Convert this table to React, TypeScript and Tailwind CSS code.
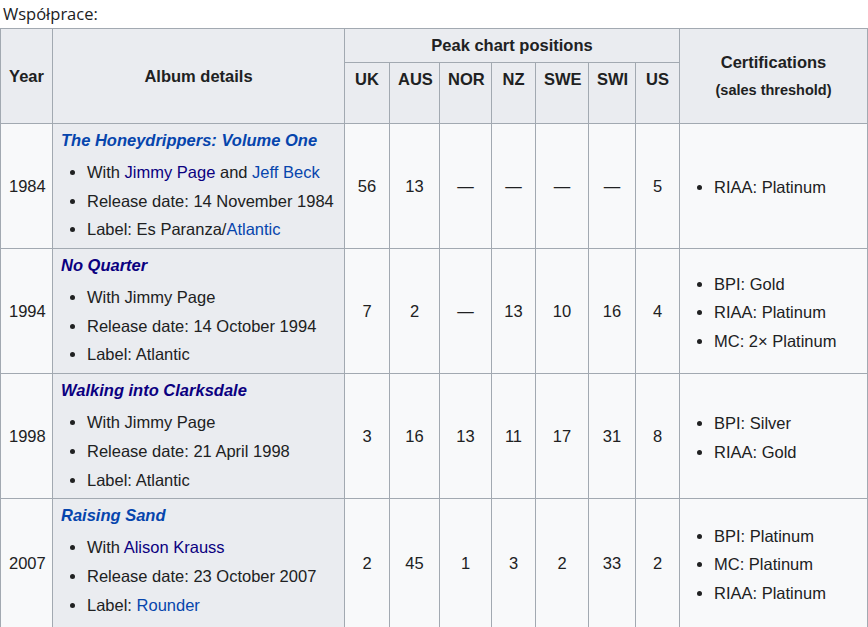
import React from 'react';

type Link = { text: string; visited?: boolean };
type Part = string | Link;

type Album = {
  year: string;
  title: Link;
  details: Part[][];
  peaks: string[];
  certs: string[];
};

const albums: Album[] = [
  {
    year: '1984',
    title: { text: 'The Honeydrippers: Volume One' },
    details: [
      ['With ', { text: 'Jimmy Page', visited: true }, ' and ', { text: 'Jeff Beck' }],
      ['Release date: 14 November 1984'],
      ['Label: Es Paranza/', { text: 'Atlantic' }],
    ],
    peaks: ['56', '13', '—', '—', '—', '—', '5'],
    certs: ['RIAA: Platinum'],
  },
  {
    year: '1994',
    title: { text: 'No Quarter', visited: true },
    details: [['With Jimmy Page'], ['Release date: 14 October 1994'], ['Label: Atlantic']],
    peaks: ['7', '2', '—', '13', '10', '16', '4'],
    certs: ['BPI: Gold', 'RIAA: Platinum', 'MC: 2× Platinum'],
  },
  {
    year: '1998',
    title: { text: 'Walking into Clarksdale', visited: true },
    details: [['With Jimmy Page'], ['Release date: 21 April 1998'], ['Label: Atlantic']],
    peaks: ['3', '16', '13', '11', '17', '31', '8'],
    certs: ['BPI: Silver', 'RIAA: Gold'],
  },
  {
    year: '2007',
    title: { text: 'Raising Sand' },
    details: [
      ['With ', { text: 'Alison Krauss', visited: true }],
      ['Release date: 23 October 2007'],
      ['Label: ', { text: 'Rounder' }],
    ],
    peaks: ['2', '45', '1', '3', '2', '33', '2'],
    certs: ['BPI: Platinum', 'MC: Platinum', 'RIAA: Platinum'],
  },
];

const countries = ['UK', 'AUS', 'NOR', 'NZ', 'SWE', 'SWI', 'US'];
const colWidths = ['w-[52px]', 'w-[292px]', 'w-[45px]', 'w-[50px]', 'w-[52px]', 'w-[44px]', 'w-[53px]', 'w-[47px]', 'w-[44px]', 'w-[188px]'];

function A({ link }: { link: Link }) {
  return <span className={link.visited ? 'text-[#0b0080]' : 'text-[#0645ad]'}>{link.text}</span>;
}

const th = 'border border-[#a2a9b1] bg-[#eaecf0] px-[8px] py-[3px] font-bold text-center';
const td = 'border border-[#a2a9b1] bg-[#f8f9fa] px-[8px] py-[3px]';

export default function App() {
  return (
    <div className="bg-white min-h-screen text-[#202122]">
      <div className="h-[28px] pt-[4px] pl-[3px] text-[16.5px] leading-[20px] font-['Open_Sans',sans-serif]">
        Współprace:
      </div>
      <table className="table-fixed border-collapse w-[867px] text-[16.5px] leading-[27px] font-['Liberation_Sans',Arial,sans-serif]">
        <colgroup>
          {colWidths.map((w, i) => (
            <col key={i} className={w} />
          ))}
        </colgroup>
        <thead>
          <tr>
            <th rowSpan={2} className={th}>
              Year
            </th>
            <th rowSpan={2} className={th}>
              Album details
            </th>
            <th colSpan={7} className={th}>
              Peak chart positions
            </th>
            <th rowSpan={2} className={th}>
              Certifications
              <br />
              <span className="text-[14.5px]">(sales threshold)</span>
            </th>
          </tr>
          <tr>
            {countries.map((c) => (
              <th key={c} className={`${th} align-top`}>
                {c}
                <br />
                <span className="text-[1px] leading-none">&nbsp;</span>
              </th>
            ))}
          </tr>
        </thead>
        <tbody>
          {albums.map((a, r) => (
            <tr key={a.year}>
              <td className={`${td} text-left`}>{a.year}</td>
              <th className={`${th} !text-left !font-normal align-top`}>
                <div className="font-bold italic">
                  <A link={a.title} />
                </div>
                <ul className="list-disc mt-[5px] ml-[26px]">
                  {a.details.map((parts, i) => (
                    <li key={i} className="mb-[1.7px]">
                      {parts.map((p, j) => (typeof p === 'string' ? <span key={j}>{p}</span> : <A key={j} link={p} />))}
                    </li>
                  ))}
                </ul>
                {r === albums.length - 1 && <div className="h-[4px]" />}
              </th>
              {a.peaks.map((p, i) => (
                <td key={i} className={`${td} text-center`}>
                  {p}
                </td>
              ))}
              <td className={td}>
                <ul className="list-disc mt-[5px] ml-[26px]">
                  {a.certs.map((c) => (
                    <li key={c} className="mb-[1.7px]">
                      {c}
                    </li>
                  ))}
                </ul>
              </td>
            </tr>
          ))}
        </tbody>
      </table>
    </div>
  );
}
